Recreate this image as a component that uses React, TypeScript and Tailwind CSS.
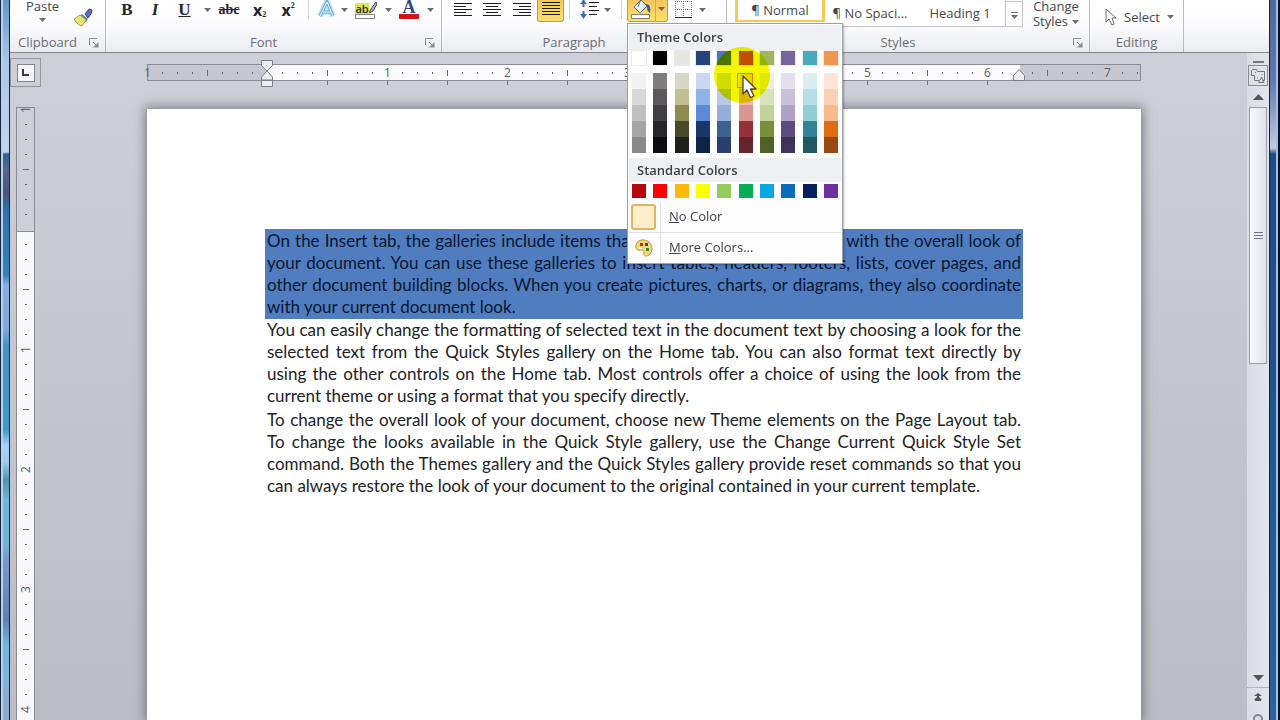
import { useState } from "react";
import type { ReactNode } from "react";

const themeColors = ["#ffffff", "#000000", "#e8e6e1", "#22437c", "#4f77b8", "#c9504a", "#9db65f", "#7a649f", "#4aa9ba", "#f0964f"];

const themeShades = [
    ["#f2f2f2", "#d8d8d8", "#bfbfbf", "#a5a5a5", "#8a8a8a"],
    ["#7f7c7d", "#5b595b", "#413f42", "#262527", "#0d0c0e"],
    ["#d8d6c6", "#c3bf95", "#8f8a4e", "#48492a", "#1e1f1a"],
    ["#c8d8f2", "#8fb2ea", "#5a8bd6", "#19376a", "#0f2344"],
    ["#d9e3f2", "#b7c9e6", "#97addb", "#3f6092", "#2a406c"],
    ["#f3dcda", "#e6b9b7", "#d99693", "#953139", "#65232b"],
    ["#e9efdb", "#d7e3bb", "#c3d29a", "#76903c", "#4f6029"],
    ["#e4dfec", "#cbc0da", "#b0a3c6", "#5e4c7e", "#3f3357"],
    ["#daeef2", "#b7dee4", "#92cdd6", "#33849a", "#215864"],
    ["#fde6d8", "#fbd2b6", "#fabb8a", "#e06c14", "#974a10"],
];

const standardColors = ["#b5080c", "#fd0309", "#fdba06", "#feff05", "#95cb5c", "#05ae55", "#08a9e2", "#0b6dba", "#06205e", "#7030a0"];

const paragraphs = [
    [
        "On the Insert tab, the galleries include items that are designed to coordinate with the overall look of",
        "your document. You can use these galleries to insert tables, headers, footers, lists, cover pages, and",
        "other document building blocks. When you create pictures, charts, or diagrams, they also coordinate",
        "with your current document look.",
    ],
    [
        "You can easily change the formatting of selected text in the document text by choosing a look for the",
        "selected text from the Quick Styles gallery on the Home tab. You can also format text directly by",
        "using the other controls on the Home tab. Most controls offer a choice of using the look from the",
        "current theme or using a format that you specify directly.",
    ],
    [
        "To change the overall look of your document, choose new Theme elements on the Page Layout tab.",
        "To change the looks available in the Quick Style gallery, use the Change Current Quick Style Set",
        "command. Both the Themes gallery and the Quick Styles gallery provide reset commands so that you",
        "can always restore the look of your document to the original contained in your current template.",
    ],
];

const Caret = () => (
    <svg width="7" height="4" viewBox="0 0 7 4" className="shrink-0" aria-hidden="true">
        <path d="M0 0h7L3.5 4z" fill="#6a6c72" />
    </svg>
);

const Separator = () => <div className="h-[19px] w-px shrink-0 bg-[#d3d5da]" />;

interface GroupProps {
    label: string;
    width: string;
    launcher?: boolean;
    children: ReactNode;
}

const Group = ({ label, width, launcher = true, children }: GroupProps) => (
    <section aria-label={label} className={`flex shrink-0 flex-col border-r border-[#b9bbc2] ${width}`}>
        <div className="flex h-[33px] items-start">{children}</div>
        <div className="flex h-[19px] items-center text-[#6b6d75]">
            <span className="flex-1 text-center">{label}</span>
            {launcher && (
                <button aria-label={`${label} options`} className="mr-1.5 ml-1 h-[10px] w-[10px]">
                    <svg width="10" height="10" viewBox="0 0 10 10" fill="none" stroke="#8b8d95">
                        <path d="M.5 7V.5H8M4 4l4 4" />
                        <path d="M9.5 4v5.5H4z" fill="#8b8d95" stroke="none" />
                    </svg>
                </button>
            )}
        </div>
    </section>
);

interface ToolProps {
    label: string;
    width: string;
    children: ReactNode;
}

const Tool = ({ label, width, children }: ToolProps) => (
    <button aria-label={label} className={`flex h-[19px] shrink-0 items-center justify-center ${width}`}>
        {children}
    </button>
);

const Lines = ({ rows }: { rows: number[][] }) => (
    <svg width="18" height="18" viewBox="0 0 18 18" stroke="#1d1d1f" aria-hidden="true">
        {rows.map(([from, to], i) => (
            <path key={i} d={`M${from} ${i * 3 + 2.5}H${to}`} />
        ))}
    </svg>
);

const Swatch = ({ color, height = "h-[14px]" }: { color: string; height?: string }) => (
    <button aria-label={color} className={`block w-[14px] ${height}`} style={{ backgroundColor: color }} />
);

const ColorMenu = () => (
    <div role="menu" className="absolute top-full left-0 z-20 mt-px w-[216px] border border-[#9ea1a8] bg-[#fdfdfe] p-px text-[#3f4149] shadow-[1px_1px_2px_rgba(0,0,0,0.3)]">
        <h2 className="bg-[#eff0f4] px-2 text-[13px] leading-[25px] font-semibold">Theme Colors</h2>
        <div className="flex justify-between px-[3px] pt-px">
            {themeColors.map((color) => (
                <div key={color} className="-m-px border border-[#e9e9ec]">
                    <Swatch color={color} />
                </div>
            ))}
        </div>
        <div className="relative mt-[8px] flex justify-between px-[3px]">
            {themeShades.map((shades) => (
                <div key={shades[0]}>
                    {shades.map((color) => (
                        <Swatch key={color} color={color} height="h-[16px]" />
                    ))}
                </div>
            ))}
            <div className="absolute top-0 left-[108px] h-[15px] w-[16px] border border-[#e8882a]" />
            <div className="absolute top-[-26px] left-[85px] h-[56px] w-[56px] rounded-full bg-[#f4f800] mix-blend-multiply" />
            <svg className="absolute top-[2px] left-[113px]" width="16" height="24" viewBox="0 0 16 24" aria-hidden="true">
                <path d="M1 1v18l4-4 3.500 7.500 3.500-1.500L8.500 14H14z" fill="#fff" stroke="#4a4338" strokeWidth="1.300" strokeLinejoin="round" />
            </svg>
        </div>
        <h2 className="mt-[5px] bg-[#eff0f4] px-2 text-[13px] leading-[24px] font-semibold">Standard Colors</h2>
        <div className="flex justify-between px-[3px] pt-[2px] pb-[4px]">
            {standardColors.map((color) => (
                <Swatch key={color} color={color} />
            ))}
        </div>
        <button role="menuitem" className="flex h-[30px] w-full items-center text-[13px]">
            <span className="ml-[2px] h-[26px] w-[25px] rounded-[3px] border-2 border-[#dfb469] bg-[#fbefc9]" />
            <span className="ml-[4px] flex h-full flex-1 items-center border-l border-[#e0e1e6] pl-2">
                <span><u>N</u>o Color</span>
            </span>
        </button>
        <button role="menuitem" className="flex h-[30px] w-full items-center border-t border-[#e0e1e6] text-[13px]">
            <svg width="18" height="18" viewBox="0 0 18 18" className="ml-[6px]" aria-hidden="true">
                <path d="M1 6C2 1 9-1 14 3c4 4 4 10 0 13-3 2-6 1-5-2 0-3-2-3-4-3-3 1-5-2-4-5z" fill="#f3d873" stroke="#c09a3a" />
                <path d="M5 4h3v3H5z" fill="#b8331f" />
                <path d="M10 4h3v3h-3z" fill="#274a8e" />
                <path d="M11 9h3v3h-3z" fill="#2d8a3a" />
                <path d="M4 8h3v2H4z" fill="#fff" />
            </svg>
            <span className="ml-[7px] flex h-full flex-1 items-center border-l border-[#e0e1e6] pl-2">
                <span><u>M</u>ore Colors...</span>
            </span>
        </button>
    </div>
);

const Ribbon = () => {
    const [menuOpen, setMenuOpen] = useState(true);

    return (
        <header className="relative z-10 flex h-[53px] shrink-0 border-b border-[#85878e] bg-linear-to-b from-white via-[#fbfbfd] to-[#ebecf1] text-[13px] text-[#45474e]">
            <Group label="Clipboard" width="w-[96px]">
                <button className="ml-4 flex flex-col items-center leading-[12px]">
                    Paste
                    <span className="mt-1.5"><Caret /></span>
                </button>
                <button aria-label="Format Painter" className="mt-2 ml-3.5">
                    <svg width="20" height="19" viewBox="0 0 20 19">
                        <path d="M12 6l4-5 3 1-1 4-3 4z" fill="#5c6fc0" stroke="#36478f" />
                        <path d="M9 6l6 5-2 3-7-5z" fill="#777d91" />
                        <path d="M7 7l6 5-4 6C5 17 3 14 1 11z" fill="#e9e37c" stroke="#aaa34b" />
                    </svg>
                </button>
            </Group>

            <Group label="Font" width="w-[336px]">
                <div className="flex items-center pl-[7px] font-['Liberation_Serif',serif] text-[17px] font-bold text-[#26272b]">
                    <Tool label="Bold" width="w-[28px]">B</Tool>
                    <Tool label="Italic" width="w-[28px]"><i>I</i></Tool>
                    <Tool label="Underline" width="w-[31px]"><u>U</u></Tool>
                    <Tool label="Underline style" width="w-[14px]"><Caret /></Tool>
                    <Tool label="Strikethrough" width="w-[30px]"><s className="text-sm">abc</s></Tool>
                    <Tool label="Subscript" width="w-[31px]">
                        <span className="font-['Open_Sans',sans-serif] text-base">x</span>
                        <span className="pt-2.5 text-[8px]">2</span>
                    </Tool>
                    <Tool label="Superscript" width="w-[26px]">
                        <span className="font-['Open_Sans',sans-serif] text-base">x</span>
                        <span className="pb-2 text-[8px]">2</span>
                    </Tool>
                    <div className="flex w-[15px] justify-center"><Separator /></div>
                    <Tool label="Text Effects" width="w-[22px]">
                        <svg width="20" height="19" viewBox="0 0 20 19" fill="none">
                            <path d="M3 16L10 1l6 15M6 12h8" stroke="#c3e2f3" strokeWidth="6" strokeLinejoin="round" />
                            <path d="M3 16L10 2l6 14M6 12h8" stroke="#6ba9d0" strokeWidth="3" />
                            <path d="M3 16L10 2l6 14M6 12h8" stroke="#f4fbff" />
                        </svg>
                    </Tool>
                    <Tool label="Text Effects menu" width="w-[12px]"><Caret /></Tool>
                    <Tool label="Text Highlight Color" width="w-[32px]">
                        <span className="flex flex-col items-start">
                            <span className="flex items-end">
                                <span className="bg-[#dce84a] font-['Open_Sans',sans-serif] text-[11px] leading-[11px] font-semibold">ab</span>
                                <svg width="8" height="13" viewBox="0 0 8 13">
                                    <path d="M7 1L2 8l-2 4 4-2 4-7z" fill="#b9bcc4" stroke="#3a3c44" />
                                </svg>
                            </span>
                            <span className="h-[5px] w-[20px] border border-[#85878e] bg-white" />
                        </span>
                    </Tool>
                    <Tool label="Text Highlight menu" width="w-[12px]"><Caret /></Tool>
                    <Tool label="Font Color" width="w-[30px]">
                        <span className="flex w-[20px] flex-col items-center border-b-5 border-[#d0151b] text-[18px] leading-[14px] text-[#34487c]">A</span>
                    </Tool>
                    <Tool label="Font Color menu" width="w-[12px]"><Caret /></Tool>
                </div>
            </Group>

            <Group label="Paragraph" width="w-[285px]">
                <div className="flex items-center pl-[6px]">
                    <Tool label="Align Left" width="w-[29px]"><Lines rows={[[0, 18], [0, 12], [0, 18], [0, 12], [0, 18]]} /></Tool>
                    <Tool label="Center" width="w-[29px]"><Lines rows={[[0, 18], [3, 15], [0, 18], [3, 15], [0, 18]]} /></Tool>
                    <Tool label="Align Right" width="w-[31px]"><Lines rows={[[0, 18], [6, 18], [0, 18], [6, 18], [0, 18]]} /></Tool>
                </div>
                <button aria-label="Justify" aria-pressed="true" className="flex h-[22px] w-[27px] shrink-0 justify-center rounded-b-[3px] border border-t-0 border-[#c99a3c] bg-linear-to-b from-[#f5c65b] to-[#fde06d]">
                    <Lines rows={[[0, 18], [0, 18], [0, 18], [0, 18], [0, 18]]} />
                </button>
                <div className="flex items-center pl-[5px]">
                    <Separator />
                    <Tool label="Line Spacing" width="w-[50px]">
                        <svg width="20" height="19" viewBox="0 0 20 19">
                            <path d="M3.500 0v7M3.500 11v6" stroke="#3f68ad" strokeWidth="2" />
                            <path d="M0 4l3.500-4L7 4zM0 14l3.500 5L7 14z" fill="#3f68ad" />
                            <path d="M9 2.500h10M9 6.500h8M9 10.500h10M9 14.500h8" stroke="#1d1d1f" />
                        </svg>
                        <span className="ml-1"><Caret /></span>
                    </Tool>
                    <div className="mr-[5px] ml-px"><Separator /></div>
                </div>
                <div className="relative shrink-0">
                    <div className="flex h-[22px] rounded-b-[3px] border border-t-0 border-[#c99a3c] bg-linear-to-b from-[#f5c65b] to-[#fde06d]">
                        <button aria-label="Shading" className="flex w-[27px] justify-center">
                            <svg width="21" height="19" viewBox="0 0 21 19">
                                <path d="M3 7l7-7 6 6-7 7z" fill="#eef1f8" stroke="#5f6b84" />
                                <path d="M7 7l3-8" stroke="#5f6b84" />
                                <path d="M15 4c4 0 5 4 4 9-2-1-3-3-3-6z" fill="#3b5ba2" />
                                <path d="M.5 14.500h18v4H.5z" fill="#fff" stroke="#858074" />
                            </svg>
                        </button>
                        <button aria-label="Shading menu" aria-expanded={menuOpen} onClick={() => setMenuOpen(!menuOpen)} className="flex w-[12px] items-center justify-center border-l border-[#d9a84a] pb-1">
                            <Caret />
                        </button>
                    </div>
                    {menuOpen && <ColorMenu />}
                </div>
                <Tool label="Borders" width="w-[30px]">
                    <svg width="17" height="18" viewBox="0 0 17 18" fill="none" stroke="#74777f">
                        <path d="M.5 0v15M8.500 0v15M16.500 0v15M0 .5h17M0 8.500h17" strokeDasharray="1 1" />
                        <path d="M0 16.500h17" stroke="#2c2d31" />
                    </svg>
                </Tool>
                <Tool label="Borders menu" width="w-[9px]"><Caret /></Tool>
            </Group>

            <Group label="Styles" width="w-[363px]">
                <div className="ml-[8px] flex h-[27px] border-b border-[#c4c6cc] bg-white leading-[18px]">
                    <button className="h-[22px] w-[90px] border-x-3 border-b-2 border-[#f0cb58] text-center leading-[17px]">¶ Normal</button>
                    <button className="w-[90px] text-center">¶ No Spaci...</button>
                    <button className="w-[90px] text-center leading-[17px]">Heading 1</button>
                </div>
                <button aria-label="More styles" className="flex h-[27px] w-[18px] flex-col items-center justify-end gap-[2px] border border-t-0 border-[#c4c6cc] pb-[7px]">
                    <span className="w-full border-t border-[#c4c6cc]" />
                    <span className="mt-[8px] h-px w-[7px] bg-[#6a6c72]" />
                    <Caret />
                </button>
                <button className="ml-[6px] w-[54px] text-center leading-[15px]">
                    <span className="-mt-px block">Change</span>
                    <span className="flex items-center justify-center gap-1">Styles <Caret /></span>
                </button>
            </Group>

            <Group label="Editing" width="w-[94px]" launcher={false}>
                <button className="mt-[7px] ml-[15px] flex items-center gap-[7px] leading-[20px]">
                    <svg width="12" height="18" viewBox="0 0 12 18" className="shrink-0">
                        <path d="M1 1v13l3-3 3 6 2-1-2-6h4z" fill="#fff" stroke="#6a6c72" />
                    </svg>
                    Select
                    <Caret />
                </button>
            </Group>
        </header>
    );
};

// One inch is eight cells of 15px, the first inch is the page margin
const RulerMark = ({ index }: { index: number }) => {
    if (index % 8 === 0) return index === 8 ? null : <span>{Math.abs(index / 8 - 1)}</span>;
    if (index % 4 === 0) return <span className="h-[6px] w-px bg-[#686a72]" />;
    return <span className="h-[2px] w-px bg-[#686a72]" />;
};

const HorizontalRuler = () => (
    <div className="relative w-full max-w-[994px]">
        <div className="flex h-[17px] border border-[#8a8c94] bg-[linear-gradient(to_right,#c6c7d0_120px,#fbfbfd_120px,#fbfbfd_872px,#c6c7d0_872px)] text-xs leading-none text-[#5c5e66]">
            <div className="-ml-2 flex">
                {Array.from({ length: 67 }, (_, i) => (
                    <div key={i} className="flex w-[15px] shrink-0 items-center justify-center">
                        <RulerMark index={i} />
                    </div>
                ))}
            </div>
        </div>
        <div className="ml-[150px] flex h-[5px]">
            {Array.from({ length: 12 }, (_, i) => (
                <div key={i} className="flex w-[60px] shrink-0 justify-center">
                    <span className="h-[4px] w-px bg-[#74767e]" />
                </div>
            ))}
        </div>
        <svg className="absolute top-[-4px] left-[114px]" width="12" height="28" viewBox="0 0 12 28" fill="#eeeef2" stroke="#7d7f87">
            <path d="M.5.5h11v5L6 11 .5 5.500z" />
            <path d="M6 11l5.500 6v3H.5v-3z" />
            <path d="M.5 20.500h11v6H.5z" />
        </svg>
        <svg className="absolute top-[5px] left-[866px]" width="12" height="12" viewBox="0 0 12 12" fill="#eeeef2" stroke="#7d7f87">
            <path d="M6 .5l5.500 6v5H.5v-5z" />
        </svg>
    </div>
);

const VerticalRuler = () => (
    <div className="mx-auto w-[18px] flex-1 overflow-hidden border border-b-0 border-[#8a8c94] bg-[linear-gradient(to_bottom,#cfd0d7_123px,#8a8c94_123px,#8a8c94_124px,#f9f9fc_124px)] text-xs leading-none text-[#5c5e66]">
        <div className="-mt-1.5">
            {Array.from({ length: 42 }, (_, i) => (
                <div key={i} className="flex h-[15px] -rotate-90 items-center justify-center">
                    <RulerMark index={i} />
                </div>
            ))}
        </div>
    </div>
);

const ScrollBar = () => (
    <aside className="flex w-[22px] shrink-0 flex-col items-center bg-linear-to-r from-[#dcdde4] to-[#e3e5ee] pt-[8px] text-[#55575f]">
        <div className="h-[2px] w-[11px] bg-[#74767e]" />
        <button aria-label="View Ruler" className="mt-[2px] flex h-[21px] w-[20px] items-center justify-center border border-[#8a8c94]">
            <svg width="16" height="16" viewBox="0 0 16 16" fill="none" stroke="#74767e">
                <path d="M1.500 2.500l1-1h4l1 2h7v9h-2l1.500 2H8.500l1-2h-5v-5h-3zM7 10h1M12 6v1M5 4l1 1M10 12l1.500-3 1.500 3" />
            </svg>
        </button>
        <button aria-label="Scroll up" className="mt-[8px]">
            <svg width="11" height="6" viewBox="0 0 11 6"><path d="M0 6h11L5.500 0z" fill="currentColor" /></svg>
        </button>
        <div className="mt-[7px] flex w-full flex-1 flex-col items-center">
            <div className="flex h-[257px] w-[18px] flex-col items-center justify-center gap-[2px] border border-[#9b9da6] bg-linear-to-r from-[#fafafd] to-[#dfe3ee]">
                <span className="h-px w-[9px] bg-[#74767e]" />
                <span className="h-px w-[9px] bg-[#74767e]" />
                <span className="h-px w-[9px] bg-[#74767e]" />
            </div>
        </div>
        <button aria-label="Scroll down">
            <svg width="11" height="6" viewBox="0 0 11 6"><path d="M0 0h11L5.500 6z" fill="currentColor" /></svg>
        </button>
        <div className="mt-[6px] flex h-[33px] w-full flex-col items-center overflow-hidden border-t border-[#b1b3bb] pt-[5px]">
            <button aria-label="Previous page">
                <svg width="8" height="8" viewBox="0 0 8 8"><path d="M4 0l4 3H0zM3 3h2v1H3zM4 3l4 4H0zM1 7h6v1H1z" fill="currentColor" /></svg>
            </button>
            <button aria-label="Select browse object" className="mt-[13px] h-[10px] w-[10px] shrink-0 rounded-full border-2 border-[#85878e]" />
        </div>
    </aside>
);

const Page = () => (
    <main className="mt-[23px] w-full max-w-[994px] flex-1 bg-white px-[118px] pt-[120px] font-['Lato','Liberation_Sans',sans-serif] text-[17px] leading-[22px] text-[#222226] shadow-[0_0_10px_2px_rgba(70,70,80,0.6)]">
        {paragraphs.map((lines, i) => (
            <p key={i} className={i === 0 ? "bg-[#4f7dc0] px-[2px] py-px text-[#0a1730]" : "px-[2px] pb-[2px]"}>
                {lines.map((line, j) => (
                    <span key={line} className={j < 3 ? "block whitespace-nowrap [text-align-last:justify]" : "block whitespace-nowrap"}>
                        {line}{" "}
                    </span>
                ))}
            </p>
        ))}
    </main>
);

export default function App() {
    return (
        <div className="flex h-screen overflow-hidden bg-[#c9cad3] font-['Open_Sans','Noto_Sans',sans-serif]">
            <div className="w-[10px] shrink-0 border-x border-[#16263f] bg-linear-to-b from-[#7aa5d3] via-[#4a96cc] to-[#7c9bc8]">
                <div className="h-full border-l-2 border-[#b9d2ea] bg-[linear-gradient(to_bottom,#5f97cd_0,#a9c6e8_60px,#c5d5ee_152px,#2d6698_154px,#5a6390_170px,#4b5480_195px,#2e74ac_210px,#3483bd_275px,#86aee6_285px,#7ea8e0_330px,#3f97c8_345px,#3f9bce_430px,#a2d2fa_445px,#9ccdf5_462px,#4d93b4_480px,#6bbada_500px,#6bb7dc_545px,#7a97cb_560px,#5d83bc_620px,#70b6df_645px,#76b9e2_675px,#8ea9d4_700px)]" />
            </div>
            <div className="flex min-w-0 flex-1 flex-col">
                <Ribbon />
                <div className="flex min-h-0 flex-1 bg-linear-to-b from-[#cecfd7] to-[#bcbcc5]">
                    <div className="flex w-[31px] shrink-0 flex-col pt-[5px]">
                        <button aria-label="Tab selector" className="flex h-[29px] w-full items-center justify-center border border-[#9597a0]">
                            <span className="flex h-[18px] w-[18px] items-center justify-center border border-[#85878e] bg-[#f6f6fa]">
                                <span className="h-[7px] w-[7px] border-b-2 border-l-2 border-[#3b3c42]" />
                            </span>
                        </button>
                        <div className="mt-[20px] flex min-h-0 flex-1 px-[6px]">
                            <VerticalRuler />
                        </div>
                    </div>
                    <div className="flex min-w-0 flex-1 flex-col items-center pt-[11px]">
                        <HorizontalRuler />
                        <Page />
                    </div>
                    <ScrollBar />
                </div>
            </div>
            <div className="flex w-[11px] shrink-0 border-l border-[#14243c] bg-[linear-gradient(to_bottom,#56669c_0,#6377ac_80px,#c0cbdc_148px,#1e4a80_154px,#2c619c_720px)]">
                <div className="ml-auto w-[4px] border-r-2 border-l-2 border-r-[#06122a] border-l-[#9fc0e2]" />
            </div>
        </div>
    );
}
